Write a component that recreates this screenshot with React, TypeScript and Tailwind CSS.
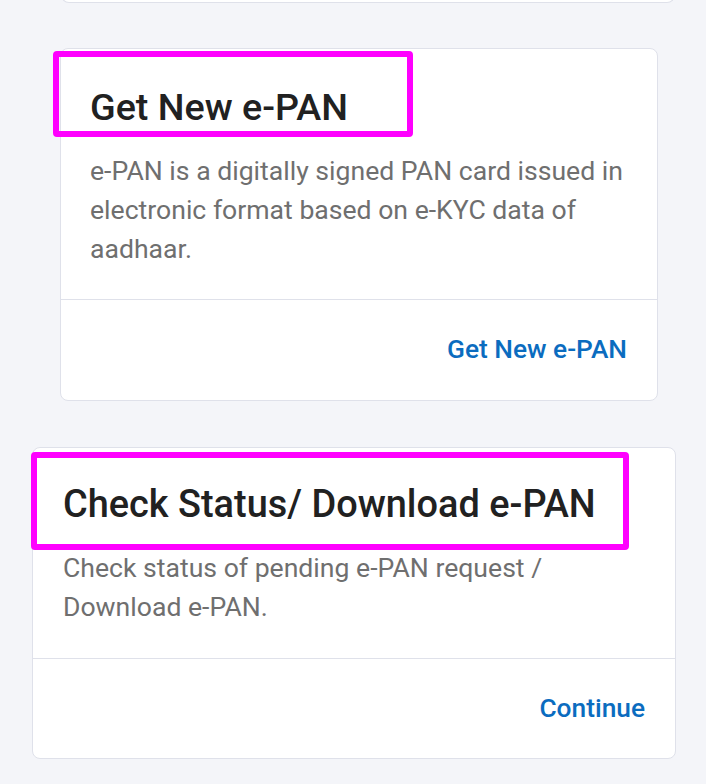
const cards = [
  {
    title: 'Get New e-PAN',
    lines: ['e-PAN is a digitally signed PAN card issued in', 'electronic format based on e-KYC data of', 'aadhaar.'],
    action: 'Get New e-PAN',
  },
  {
    title: 'Check Status/ Download e-PAN',
    lines: ['Check status of pending e-PAN request /', 'Download e-PAN.'],
    action: 'Continue',
  },
]

export default function App() {
  return (
    <div
      className="min-h-[784px] w-[706px] overflow-hidden bg-[#f4f5f9]"
      style={{ fontFamily: 'Roboto, "Liberation Sans", sans-serif' }}
    >
      {/* tail of the previous card */}
      <div className="-mt-[12px] ml-[61px] h-[15px] w-[614px] rounded-b-lg border-x-[1.5px] border-b-[1.5px] border-[#dfe1ea] bg-white" />

      {/* card 1 */}
      <div className="relative ml-[60px] mt-[45px] w-[598px] rounded-lg border-[1.5px] border-[#dfe1ea] bg-white">
        <div className="px-[29px] pt-[35px] pb-[31px]">
          <h2 className="text-[37.7px] font-medium leading-[46px] text-[#212121]">{cards[0].title}</h2>
          <p className="mt-[21px] text-[26.6px] leading-[39px] text-[#6f6f6f]">
            {cards[0].lines.map((l) => (
              <span key={l} className="block">{l}</span>
            ))}
          </p>
        </div>
        <div className="flex h-[101px] items-center justify-end border-t-[1.5px] border-[#dfe1ea] pr-[30px]">
          <span className="text-[26.3px] font-medium text-[#0b6cbf]">{cards[0].action}</span>
        </div>
        <div className="pointer-events-none absolute -left-[8px] top-[2px] h-[86px] w-[360px] rounded-[4px] border-[6px] border-[#ff00ff]" />
      </div>

      {/* card 2 */}
      <div className="relative ml-[32px] mt-[46px] w-[644px] rounded-lg border-[1.5px] border-[#dfe1ea] bg-white">
        <div className="px-[30px] pt-[33px] pb-[32px]">
          <h2 className="text-[37.9px] font-medium leading-[46px] text-[#212121]">{cards[1].title}</h2>
          <p className="mt-[21px] text-[26.6px] leading-[39px] text-[#6f6f6f]">
            {cards[1].lines.map((l) => (
              <span key={l} className="block">{l}</span>
            ))}
          </p>
        </div>
        <div className="flex h-[100px] items-center justify-end border-t-[1.5px] border-[#dfe1ea] pr-[30px]">
          <span className="text-[26.3px] font-medium text-[#0b6cbf]">{cards[1].action}</span>
        </div>
        <div className="pointer-events-none absolute -left-[2px] top-[4px] h-[98px] w-[598px] rounded-[4px] border-[6px] border-[#ff00ff]" />
      </div>
    </div>
  )
}
